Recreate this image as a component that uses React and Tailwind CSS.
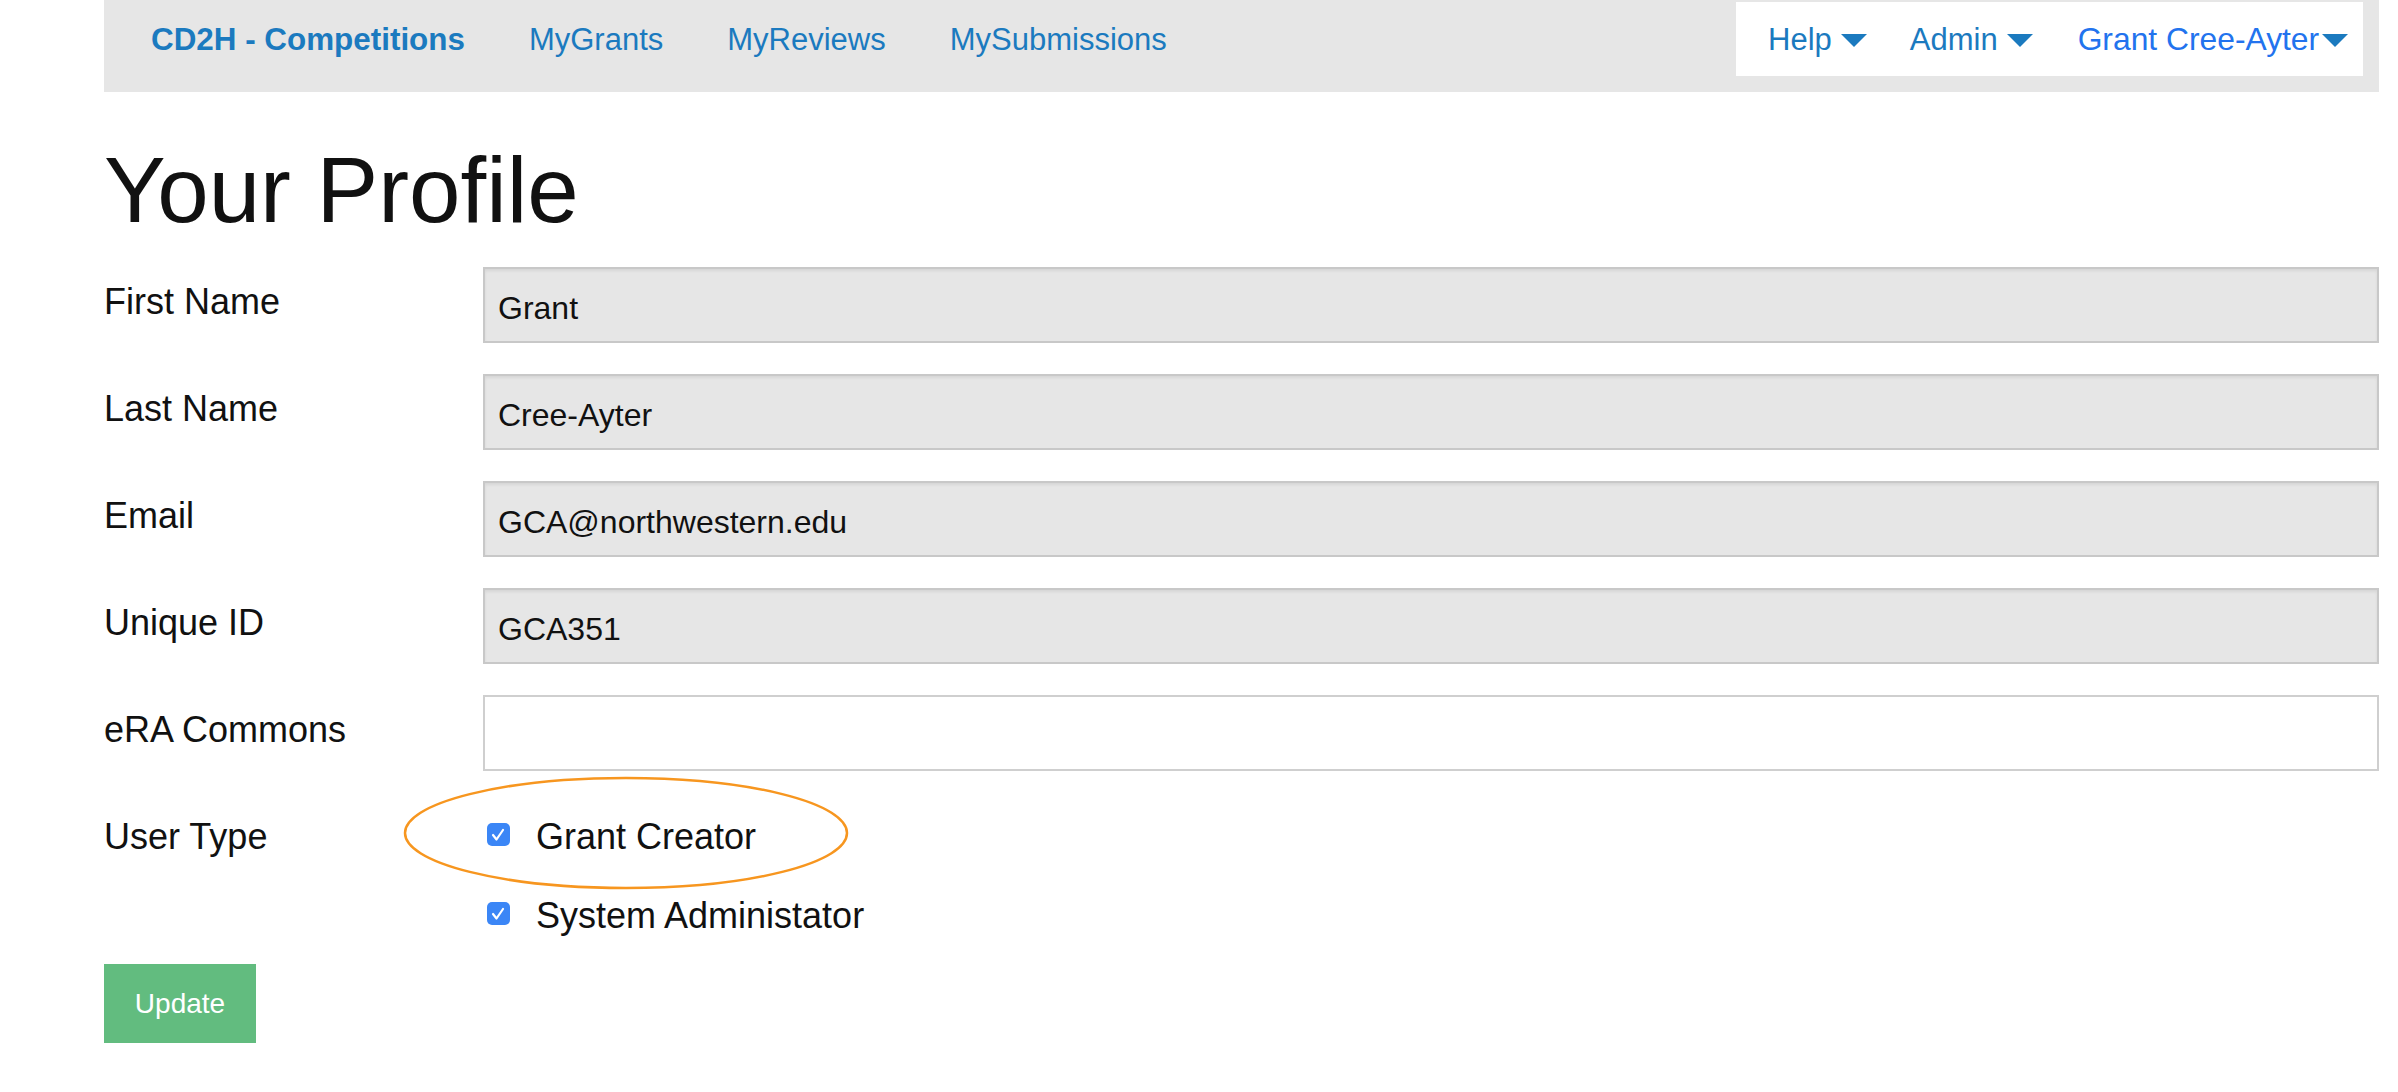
import React from 'react';

const font = { fontFamily: '"Liberation Sans", Arial, Helvetica, sans-serif' };

const Caret = ({ className = '' }) => (
    <svg width="26" height="13" viewBox="0 0 26 13" className={className}>
        <polygon points="0,0 26,0 13,13" fill="#1b7abf" />
    </svg>
);

const CheckBox = () => (
    <span className="w-[23px] h-[23px] rounded-[5px] bg-[#3b86f6] flex items-center justify-center shrink-0 mt-[6px]">
        <svg width="23" height="23" viewBox="0 0 23 23">
            <path d="M6 12 L9.5 16.5 L16 7" fill="none" stroke="white" strokeWidth="2.2" strokeLinecap="round" strokeLinejoin="round" />
        </svg>
    </span>
);

const fields = [
    { label: 'First Name', value: 'Grant', locked: true },
    { label: 'Last Name', value: 'Cree-Ayter', locked: true },
    { label: 'Email', value: 'GCA@northwestern.edu', locked: true },
    { label: 'Unique ID', value: 'GCA351', locked: true },
    { label: 'eRA Commons', value: '', locked: false },
];

export default function App() {
    return (
        <div className="bg-white text-[#111] pl-[104px] pr-[19px] pb-[49px]" style={font}>
            {/* Top navigation */}
            <nav className="h-[92px] bg-[#e6e6e6] flex items-start justify-between pt-[2px] pr-[16px]">
                <div className="h-[74px] flex items-center gap-[64px] pl-[47px] pt-[2px] text-[31px] text-[#1b7abf]">
                    <a className="font-bold text-[31.4px]">CD2H - Competitions</a>
                    <a>MyGrants</a>
                    <a>MyReviews</a>
                    <a>MySubmissions</a>
                </div>
                <div className="h-[74px] w-[627px] bg-white flex items-center pl-[32px] pt-[2px] text-[31px] text-[#1b7abf]">
                    <a className="flex items-center">
                        Help
                        <Caret className="ml-[9px]" />
                    </a>
                    <a className="flex items-center ml-[43px]">
                        Admin
                        <Caret className="ml-[9px]" />
                    </a>
                    <a className="flex items-center ml-[45px] text-[31.8px] text-[#2273ee]">
                        Grant Cree-Ayter
                        <Caret className="ml-[3px]" />
                    </a>
                </div>
            </nav>

            <h1 className="mt-[53px] text-[92.5px] leading-[90px] font-normal">Your Profile</h1>

            {/* Profile form */}
            <div className="mt-[32px] flex flex-col gap-[31px]">
                {fields.map((f) => (
                    <div key={f.label} className="flex">
                        <label className="w-[379px] shrink-0 pt-[15px] text-[36px] leading-[40px]">{f.label}</label>
                        <input
                            type="text"
                            readOnly
                            value={f.value}
                            className={`flex-1 h-[76px] border-2 px-[13px] pt-[6px] text-[32px] text-[#111] outline-none ${f.locked ? 'bg-[#e6e6e6] border-[#c8c8c8] shadow-[inset_0_2px_3px_rgba(0,0,0,0.07)]' : 'bg-white border-[#cfcfcf]'}`}
                            style={font}
                        />
                    </div>
                ))}

                <div className="flex">
                    <label className="w-[379px] shrink-0 pt-[15px] text-[36px] leading-[40px]">User Type</label>
                    <div className="relative pt-[15px] pl-[4px] flex flex-col gap-[39px] text-[36px] leading-[40px]">
                        <svg className="absolute left-[-80px] top-[-26px] pointer-events-none" width="446" height="114" viewBox="0 0 446 114">
                            <ellipse cx="223" cy="57" rx="221" ry="55" fill="none" stroke="#f7961f" strokeWidth="2.5" />
                        </svg>
                        <div className="flex items-start gap-[26px]">
                            <CheckBox />
                            <span>Grant Creator</span>
                        </div>
                        <div className="flex items-start gap-[26px]">
                            <CheckBox />
                            <span>System Administator</span>
                        </div>
                    </div>
                </div>
            </div>

            <button className="mt-[28px] w-[152px] h-[79px] bg-[#62bc7f] text-white text-[28px]" style={font}>
                Update
            </button>
        </div>
    );
}
